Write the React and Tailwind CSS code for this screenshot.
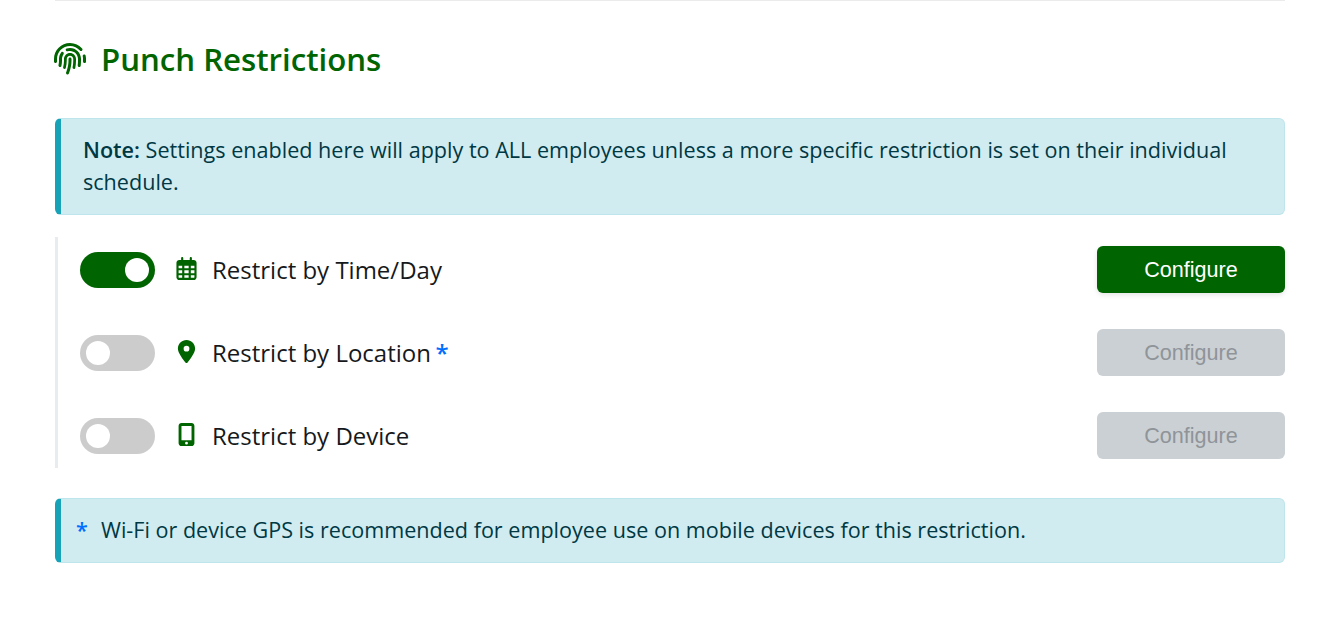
import React from "react";
import {
  FaFingerprint,
  FaRegCalendarDays,
  FaLocationDot,
  FaMobileScreenButton,
} from "react-icons/fa6";

const rows = [
  { label: "Restrict by Time/Day", Icon: FaRegCalendarDays, on: true },
  { label: "Restrict by Location", Icon: FaLocationDot, on: false, starred: true },
  { label: "Restrict by Device", Icon: FaMobileScreenButton, on: false },
];

function Toggle({ on }) {
  return (
    <button
      type="button"
      role="switch"
      aria-checked={on}
      className={`flex h-9 w-[75px] shrink-0 items-center rounded-full px-1.5 ${
        on ? "justify-end bg-[#006400]" : "justify-start bg-[#cccccc]"
      }`}
    >
      <span className="h-6 w-6 rounded-full bg-white" />
    </button>
  );
}

function Row({ label, Icon, on, starred }) {
  return (
    <div className="flex h-[47px] items-center">
      <Toggle on={on} />
      <span className="ml-5 flex w-[23px] justify-center text-[23px] text-[#006400]">
        <Icon className="-mt-[2px] shrink-0" />
      </span>
      <span className="ml-[14px] text-[24px] leading-9 whitespace-nowrap text-[#16191c]">
        {label}
        {starred && <span className="ml-[4.5px] font-semibold text-[#006fff]">*</span>}
      </span>
      <button
        type="button"
        disabled={!on}
        className={`ml-auto h-[47px] w-[188px] rounded-[6px] pt-0.5 font-['Liberation_Sans',sans-serif] text-[21.6px] ${
          on
            ? "bg-[#006400] text-white shadow-[0_2px_5px_rgba(0,0,0,0.1)]"
            : "bg-[#cbd0d4] text-[#8f9499]"
        }`}
      >
        Configure
      </button>
    </div>
  );
}

export default function App() {
  return (
    <main className="h-[639px] overflow-hidden bg-white pr-[51px] pl-[55px] font-['Open_Sans',sans-serif]">
      <div className="h-px bg-[#ebebeb]" />
      <h1 className="mt-[34px] flex h-12 items-center text-[31.2px] font-semibold text-[#006400]">
        <FaFingerprint className="-ml-px mr-[15px] h-8 w-8" />
        Punch Restrictions
      </h1>
      <div className="mt-[35px] h-[97px] rounded-[6px] border border-l-[6px] border-[#bee5eb] border-l-[#17a2b8] bg-[#d1ecf1] pt-[15px] pl-[22px] text-[21.59px] leading-8 text-[#003844]">
        <strong className="font-semibold">Note:</strong> Settings enabled here will apply to ALL
        employees unless a more specific restriction is set on their individual
        <br />
        schedule.
      </div>
      <div className="mt-[22px] flex h-[231px] flex-col gap-9 border-l-[3px] border-[#e9ecef] pt-[9px] pl-[22px]">
        {rows.map((row) => (
          <Row key={row.label} {...row} />
        ))}
      </div>
      <div className="mt-[30px] flex h-[65px] items-start rounded-[6px] border border-l-[6px] border-[#bee5eb] border-l-[#17a2b8] bg-[#d1ecf1] pt-[15px] pl-[15px] text-[21.58px] leading-8 text-[#003844]">
        <span className="w-[25px] font-semibold text-[#006fff]">*</span>
        <span>Wi-Fi or device GPS is recommended for employee use on mobile devices for this restriction.</span>
      </div>
    </main>
  );
}
